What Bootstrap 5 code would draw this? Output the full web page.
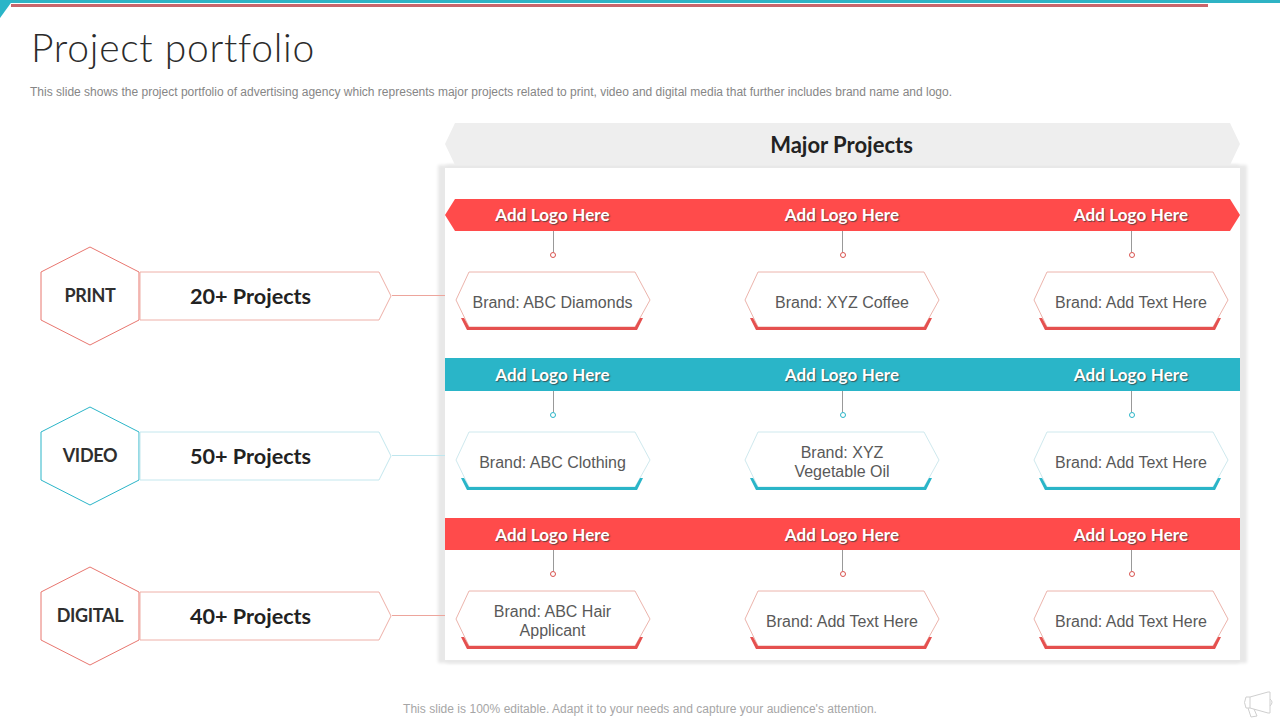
<!DOCTYPE html>
<html lang="en">
<head>
<meta charset="utf-8">
<title>Project portfolio</title>
<link rel="stylesheet" href="https://cdn.jsdelivr.net/npm/bootstrap@5.3.0/dist/css/bootstrap.min.css">
<style>
html,body{margin:0;width:1280px;height:720px;overflow:hidden;background:#fff}
body{font-family:"Liberation Sans",Arial,sans-serif;color:#595959}
.slide{width:1280px;height:720px;position:relative;overflow:hidden}
.strip-a{height:3px;background:#2fb3c4}
.strip-b{height:3px;background:#c9656b;margin:1px 72px 0 11px}
.corner{position:absolute;left:0;top:0;width:13px;height:18px;background:#2ab5c8;clip-path:polygon(0 0,100% 0,0 100%)}
.slide-title{font-family:Lato,sans-serif;font-weight:300;font-size:39px;line-height:46px;color:#2b2b2b;margin:17px 0 0 31px;letter-spacing:.72px}
.slide-sub{font-size:12px;line-height:16px;color:#868686;margin:14px 0 0 30px;letter-spacing:.005px}
.board{margin-top:23px;padding-left:40px}
.side{width:405px;padding-top:123px;flex:none;position:relative;z-index:2}
.side-row{height:160px;display:flex;align-items:flex-start;--line:#e8766f;--soft:#eeb0a8;--wire:#eda59c}
.side-row.tone-blue{--line:#2ab5c8;--soft:#c4e7ee;--wire:#bfe6ee}
.hexa{position:relative;width:100px;height:100px;flex:none;display:flex;align-items:center;justify-content:center;font-family:Lato,sans-serif;font-weight:700;font-size:18px;letter-spacing:-.3px;color:#2f2f2f}
.hexa svg,.penta svg,.brand svg{position:absolute;left:0;top:0}
.hexa span,.penta span,.brand span{position:relative}
.hexa span{top:-1px}
.penta{position:relative;width:253px;height:50px;margin-top:25px;margin-left:-1px;padding-left:51px;display:flex;align-items:center;font-family:Lato,sans-serif;font-weight:700;font-size:21.6px;color:#222}
.wire{flex:1;height:1px;margin-top:49px;background:var(--wire)}
.main-col{width:795px;flex:none;position:relative}
.ribbon{position:relative;z-index:1;height:42px;background:#eee;clip-path:polygon(0 50%,10px 0,calc(100% - 10px) 0,100% 50%,calc(100% - 10px) 100%,10px 100%);font-family:Lato,sans-serif;font-weight:700;font-size:22px;line-height:44px;color:#222;text-align:center;padding-right:2px}
.panel{height:492px;margin-top:3px;background:#fff;box-shadow:-4px 0 3px 3px #e8e8e8,4px 0 3px 3px #e8e8e8;padding-top:31px}
.group{height:160px}
.group.first{height:159px}
.head-bar{height:32px;display:grid;grid-template-columns:215px 364px 214px;color:#fff;font-family:Lato,sans-serif;font-weight:700;font-size:17px;letter-spacing:.12px;line-height:32px;text-align:center;text-shadow:1px 1px 1px rgba(60,60,60,.75)}
.head-bar.red{background:#ff4b4b}
.head-bar.blue{background:#2ab5c8;height:33px;line-height:33px}
.head-bar.lower{line-height:34px}
.head-bar.notch{clip-path:polygon(0 50%,10px 0,calc(100% - 10px) 0,100% 50%,calc(100% - 10px) 100%,10px 100%)}
.cells{display:grid;grid-template-columns:215px 364px 214px}
.cell{display:flex;flex-direction:column;align-items:center}
.stem{width:1px;height:21px;background:#999;margin-left:1px}
.pin-ring{width:6px;height:6px;border-radius:50%;border:1px solid #d9534f;background:#fff;margin-left:1px}
.pin-ring.b{border-color:#2ab5c8}
.brand{position:relative;width:196px;height:60px;margin-top:13px;display:flex;align-items:center;justify-content:center;text-align:center;font-size:16px;line-height:19px;color:#595959;padding:2px 15px 0}
.brand-red{--edge:#ecb4ac;--base:#e5504f}
.brand-blue{--edge:#cfe9ee;--base:#2ab5c8}
.horn{position:absolute;left:1243px;top:691px}
.foot{position:absolute;left:0;right:0;top:701px;text-align:center;font-size:12px;line-height:16px;letter-spacing:.03px;color:#a6a6a6}
</style>
</head>
<body>
<svg width="0" height="0" class="position-absolute">
<symbol id="hx" viewBox="0 0 100 100"><polygon points="50,1 99,26 99,74 50,99 1,74 1,26" fill="#fff" style="stroke:var(--line)"/></symbol>
<symbol id="pt" viewBox="0 0 253 50"><polygon points="1,1 240,1 252,25 240,49 1,49" fill="#fff" style="stroke:var(--soft)"/></symbol>
<symbol id="br" viewBox="0 0 196 60"><polygon points="14,1 180,1 195,29 180,56 14,56 1,29" fill="#fff" style="stroke:var(--edge)"/><polygon points="6,47 12,59 182,59 188,47 185,47 180,56 14,56 9,47" style="fill:var(--base)"/></symbol>
</svg>
<div class="slide">
  <div class="corner"></div>
  <div class="strip-a"></div>
  <div class="strip-b"></div>
  <h1 class="slide-title">Project portfolio</h1>
  <p class="slide-sub">This slide shows the project portfolio of advertising agency which represents major projects related to print, video and digital media that further includes brand name and logo.</p>
  <div class="board d-flex">
    <div class="side">
      <div class="side-row tone-red">
        <div class="hexa"><svg width="100" height="100"><use href="#hx"/></svg><span>PRINT</span></div>
        <div class="penta"><svg width="253" height="50"><use href="#pt"/></svg><span>20+ Projects</span></div>
        <div class="wire"></div>
      </div>
      <div class="side-row tone-blue">
        <div class="hexa"><svg width="100" height="100"><use href="#hx"/></svg><span>VIDEO</span></div>
        <div class="penta"><svg width="253" height="50"><use href="#pt"/></svg><span>50+ Projects</span></div>
        <div class="wire"></div>
      </div>
      <div class="side-row tone-red">
        <div class="hexa"><svg width="100" height="100"><use href="#hx"/></svg><span>DIGITAL</span></div>
        <div class="penta"><svg width="253" height="50"><use href="#pt"/></svg><span>40+ Projects</span></div>
        <div class="wire"></div>
      </div>
    </div>
    <div class="main-col">
      <div class="ribbon">Major Projects</div>
      <div class="panel">
        <div class="group first brand-red">
          <div class="head-bar red notch"><div>Add Logo Here</div><div>Add Logo Here</div><div>Add Logo Here</div></div>
          <div class="cells">
            <div class="cell"><div class="stem"></div><div class="pin-ring"></div><div class="brand"><svg width="196" height="60"><use href="#br"/></svg><span>Brand: ABC Diamonds</span></div></div>
            <div class="cell"><div class="stem"></div><div class="pin-ring"></div><div class="brand"><svg width="196" height="60"><use href="#br"/></svg><span>Brand: XYZ Coffee</span></div></div>
            <div class="cell"><div class="stem"></div><div class="pin-ring"></div><div class="brand"><svg width="196" height="60"><use href="#br"/></svg><span>Brand: Add Text Here</span></div></div>
          </div>
        </div>
        <div class="group brand-blue">
          <div class="head-bar blue"><div>Add Logo Here</div><div>Add Logo Here</div><div>Add Logo Here</div></div>
          <div class="cells">
            <div class="cell"><div class="stem"></div><div class="pin-ring b"></div><div class="brand"><svg width="196" height="60"><use href="#br"/></svg><span>Brand: ABC Clothing</span></div></div>
            <div class="cell"><div class="stem"></div><div class="pin-ring b"></div><div class="brand"><svg width="196" height="60"><use href="#br"/></svg><span>Brand: XYZ<br>Vegetable Oil</span></div></div>
            <div class="cell"><div class="stem"></div><div class="pin-ring b"></div><div class="brand"><svg width="196" height="60"><use href="#br"/></svg><span>Brand: Add Text Here</span></div></div>
          </div>
        </div>
        <div class="group brand-red">
          <div class="head-bar red lower"><div>Add Logo Here</div><div>Add Logo Here</div><div>Add Logo Here</div></div>
          <div class="cells">
            <div class="cell"><div class="stem"></div><div class="pin-ring"></div><div class="brand"><svg width="196" height="60"><use href="#br"/></svg><span>Brand: ABC Hair<br>Applicant</span></div></div>
            <div class="cell"><div class="stem"></div><div class="pin-ring"></div><div class="brand"><svg width="196" height="60"><use href="#br"/></svg><span>Brand: Add Text Here</span></div></div>
            <div class="cell"><div class="stem"></div><div class="pin-ring"></div><div class="brand"><svg width="196" height="60"><use href="#br"/></svg><span>Brand: Add Text Here</span></div></div>
          </div>
        </div>
      </div>
    </div>
  </div>
  <div class="foot">This slide is 100% editable. Adapt it to your needs and capture your audience's attention.</div>
  <svg class="horn" width="32" height="28" viewBox="0 0 32 28" fill="none" stroke="#cfcfcf" stroke-width="1"><path d="M7 6 L25 1 L27 1 L27 22 L25 22 L7 17 Z"/><path d="M7 6 L3 6 Q0 11.5 3 17 L7 17"/><path d="M27 8 Q31 11 27 15"/><path d="M5 17 L8 26 L14 25 L11 18"/></svg>
</div>
</body>
</html>
